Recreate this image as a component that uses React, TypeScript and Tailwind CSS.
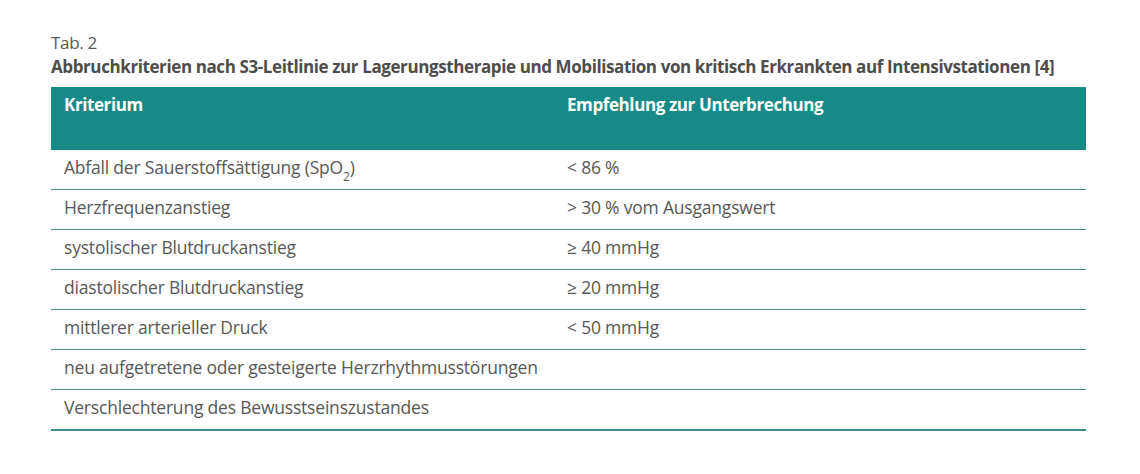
import React from "react";

const rows: [React.ReactNode, string][] = [
  [<>Abfall der Sauerstoffsättigung (SpO<sub className="text-[12px] align-[-4px]">2</sub>)</>, "< 86 %"],
  ["Herzfrequenzanstieg", "> 30 % vom Ausgangswert"],
  ["systolischer Blutdruckanstieg", "≥ 40 mmHg"],
  ["diastolischer Blutdruckanstieg", "≥ 20 mmHg"],
  ["mittlerer arterieller Druck", "< 50 mmHg"],
  ["neu aufgetretene oder gesteigerte Herzrhythmusstörungen", ""],
  ["Verschlechterung des Bewusstseinszustandes", ""],
];

export default function App() {
  return (
    <div className="w-[1140px] h-[474px] bg-white pt-[30px] pl-[51px] text-[#585858]" style={{ fontFamily: '"Open Sans", sans-serif' }}>
      <div className="text-[17px] leading-[25px] tracking-[-0.3px]">Tab. 2</div>
      <div className="text-[17px] leading-[23px] font-bold text-[#4d4d4d] tracking-[-0.4px]">
        Abbruchkriterien nach S3-Leitlinie zur Lagerungstherapie und Mobilisation von kritisch Erkrankten auf Intensivstationen [4]
      </div>
      <div className="w-[1035px] mt-[9px]">
        <div className="grid grid-cols-[502px_1fr] h-[63px] bg-[#168a86] text-white font-bold text-[17px] tracking-[-0.4px] pt-[5px]">
          <div className="pl-[13px]">Kriterium</div>
          <div className="pl-[14px]">Empfehlung zur Unterbrechung</div>
        </div>
        {rows.map(([a, b], i) => (
          <div
            key={i}
            className={`grid grid-cols-[502px_1fr] items-center text-[17.5px] tracking-[-0.2px] pb-[4px] ${i === rows.length - 1 ? "h-[41px] border-b-2 border-[#3e8a8c]" : "h-[40px] border-b border-[#4b8e90]"}`}
          >
            <div className="pl-[13px]">{a}</div>
            <div className="pl-[14px]">{b}</div>
          </div>
        ))}
      </div>
    </div>
  );
}
